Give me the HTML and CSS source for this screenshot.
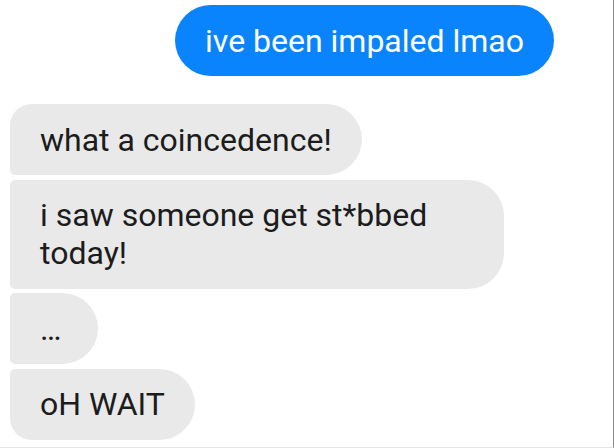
FILE: index.html
```html
<!DOCTYPE html>
<html>
<head>
<meta charset="utf-8">
<link rel="stylesheet" href="styles.css">
</head>
<body>
<div class="chat">
  <div class="bubble out">ive been impaled lmao</div>
  <div class="group">
    <div class="bubble in first">what a coincedence!</div>
    <div class="bubble in wrap">i saw someone get st*bbed today!</div>
    <div class="bubble in dots">…</div>
    <div class="bubble in last">oH WAIT</div>
  </div>
</div>
</body>
</html>
```
FILE: styles.css
```css
html, body {
  margin: 0;
  padding: 0;
  background: #ffffff;
}
.chat {
  box-sizing: border-box;
  width: 614px;
  height: 448px;
  border-right: 1px solid #8c8c8c;
  border-bottom: 1px solid #e6e6e6;
  padding: 5px 59px 0 10px;
  display: flex;
  flex-direction: column;
  align-items: flex-start;
  font-family: Roboto, "Liberation Sans", sans-serif;
  font-size: 32px;
  line-height: 38px;
}
.bubble {
  padding: 16.5px 30px;
  white-space: nowrap;
}
.out {
  align-self: flex-end;
  background: #0a84fc;
  color: #ffffff;
  border-radius: 36px;
}
.group {
  margin-top: 28px;
  display: flex;
  flex-direction: column;
  align-items: flex-start;
  gap: 4.5px;
}
.in {
  background: #e9e9e9;
  color: #1c1c1c;
  border-radius: 5px 36px 36px 5px;
}
.in.wrap {
  white-space: normal;
  box-sizing: border-box;
  max-width: 494px;
}
.in.first {
  border-top-left-radius: 22px;
}
.in.last {
  border-bottom-left-radius: 22px;
}
.in.dots {
  min-width: 28px;
}
```
